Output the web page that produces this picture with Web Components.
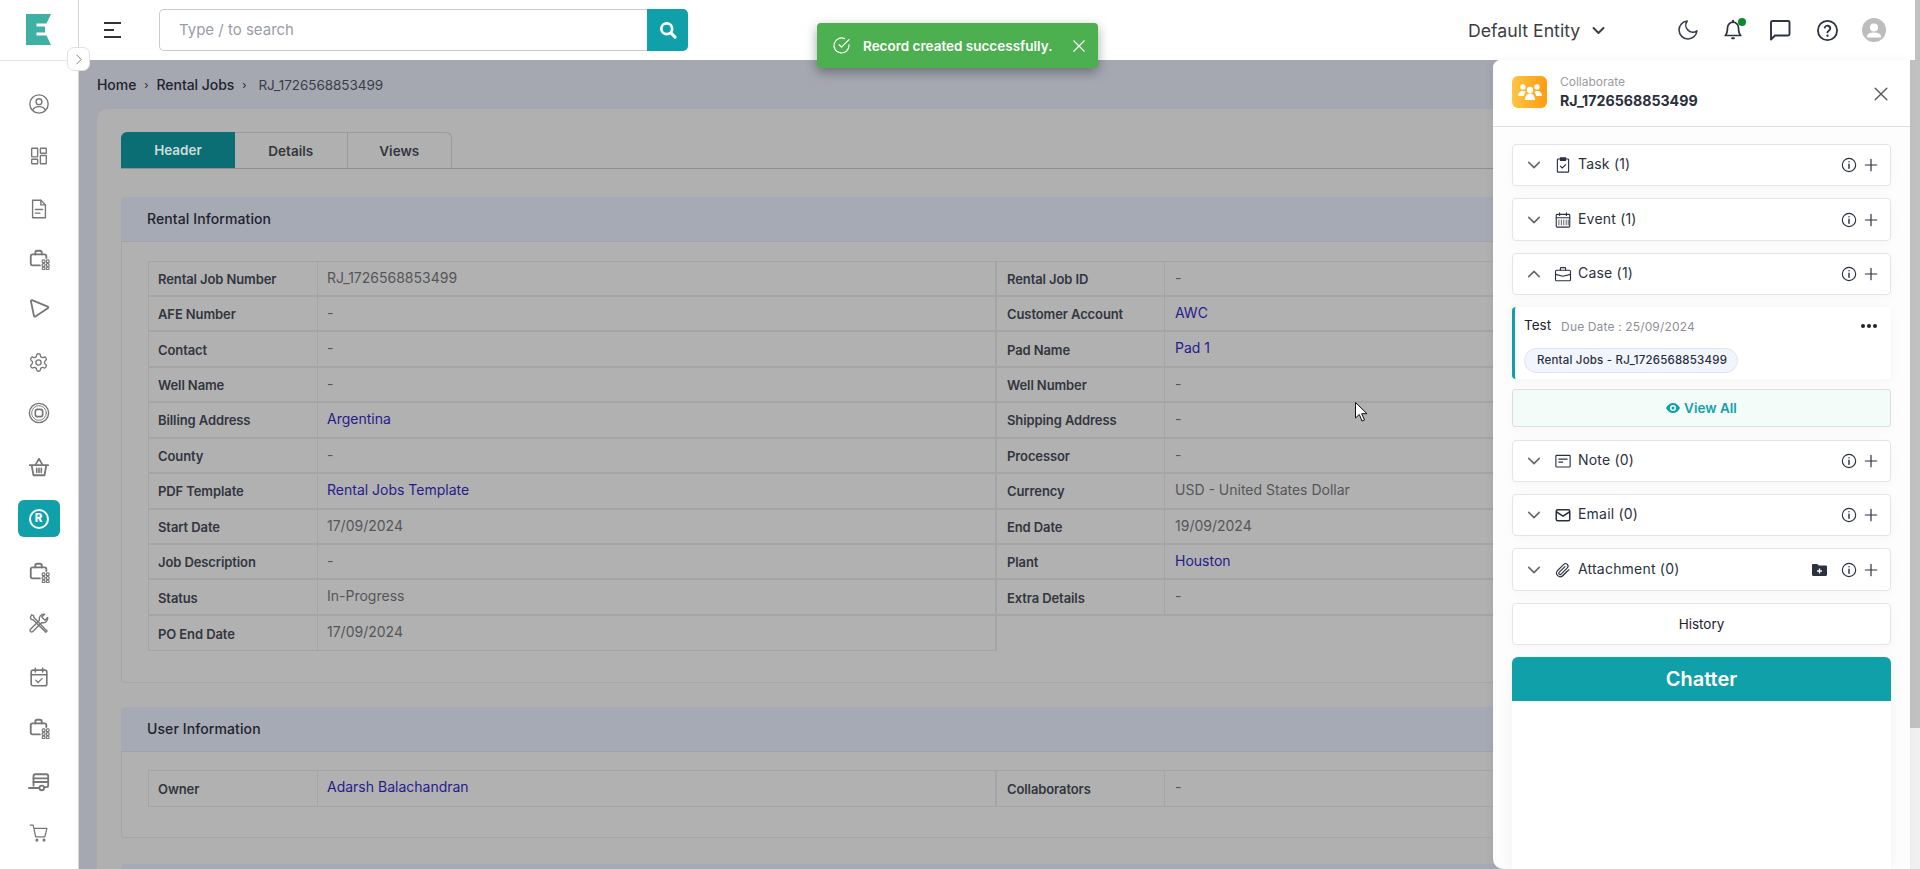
<!DOCTYPE html>
<html lang="en"><head><meta charset="utf-8"><title>Rental Job</title>
<style>
html,body{margin:0;height:100%;overflow:hidden;background:#fff;font-family:Inter,"Noto Sans",sans-serif}
</style></head><body>
<x-app>
  <x-sidebar slot="side"></x-sidebar>
  <x-topbar slot="top"></x-topbar>
  <x-crumbs slot="main"></x-crumbs>
  <x-card slot="main">
    <x-tabs>
      <x-tab active style="width:114px">Header</x-tab>
      <x-tab style="width:112.500px">Details</x-tab>
      <x-tab last style="width:104.500px">Views</x-tab>
    </x-tabs>
    <x-section heading="Rental Information" gap="28">
      <x-field-table>
        <x-field label="Rental Job Number" value="RJ_1726568853499"></x-field>
        <x-field right label="Rental Job ID" value="-"></x-field>
        <x-field label="AFE Number" value="-"></x-field>
        <x-field right link label="Customer Account" value="AWC"></x-field>
        <x-field label="Contact" value="-"></x-field>
        <x-field right link label="Pad Name" value="Pad 1"></x-field>
        <x-field label="Well Name" value="-"></x-field>
        <x-field right label="Well Number" value="-"></x-field>
        <x-field link label="Billing Address" value="Argentina"></x-field>
        <x-field right label="Shipping Address" value="-"></x-field>
        <x-field label="County" value="-"></x-field>
        <x-field right label="Processor" value="-"></x-field>
        <x-field link label="PDF Template" value="Rental Jobs Template"></x-field>
        <x-field right label="Currency" value="USD - United States Dollar"></x-field>
        <x-field label="Start Date" value="17/09/2024"></x-field>
        <x-field right label="End Date" value="19/09/2024"></x-field>
        <x-field label="Job Description" value="-"></x-field>
        <x-field right link label="Plant" value="Houston"></x-field>
        <x-field label="Status" value="In-Progress"></x-field>
        <x-field right label="Extra Details" value="-"></x-field>
        <x-field last label="PO End Date" value="17/09/2024"></x-field>
      </x-field-table>
    </x-section>
    <x-section heading="User Information" gap="24" tail="30">
      <x-field-table>
        <x-field last link label="Owner" value="Adarsh Balachandran"></x-field>
        <x-field last right label="Collaborators" value="-"></x-field>
      </x-field-table>
    </x-section>
    <x-section heading="" gap="26"></x-section>
  </x-card>
  <x-toast slot="over">Record created successfully.</x-toast>
  <x-collab slot="over">
    <x-row icon="task" label="Task (1)"></x-row>
    <x-row icon="event" label="Event (1)"></x-row>
    <x-row icon="case" label="Case (1)" open></x-row>
    <x-case-card></x-case-card>
    <x-viewall></x-viewall>
    <x-row icon="note" label="Note (0)"></x-row>
    <x-row icon="mail" label="Email (0)"></x-row>
    <x-row icon="clip" label="Attachment (0)" folder></x-row>
    <x-history></x-history>
    <x-chatter></x-chatter>
  </x-collab>
  <x-scroll slot="over"></x-scroll>
  <x-cursor slot="over"></x-cursor>
</x-app>
<script>
const P={
user:'<circle cx="12" cy="12" r="10"/><circle cx="12" cy="9.5" r="3.2"/><path d="M5.2 18.5c1.2-2.6 3.8-3.6 6.8-3.6s5.600 1 6.800 3.600"/>',
dash:'<rect x="4" y="3.500" width="6.500" height="9.500" rx=".6"/><rect x="13.500" y="3.500" width="6.500" height="5.500" rx=".6"/><rect x="4" y="15.500" width="6.500" height="5" rx=".6"/><rect x="13.500" y="11.500" width="6.500" height="9" rx=".6"/>',
doc:'<path d="M5 2.500h9l5 5v14H5z"/><path d="M14 2.500v5h5M8 12.500h8M8 16.500h5"/>',
brief:'<path d="M13 19H5a2 2 0 0 1-2-2V9a2 2 0 0 1 2-2h13a2 2 0 0 1 2 2v2" stroke-width="2"/><path d="M8 7V5a2 2 0 0 1 2-2h3a2 2 0 0 1 2 2v2" stroke-width="2"/><g stroke-width="1.300"><rect x="15.500" y="13" width="3" height="3" rx="1"/><rect x="20" y="13" width="3" height="3" rx="1"/><rect x="15.500" y="17" width="3" height="3" rx="1"/><rect x="20" y="17" width="3" height="3" rx="1"/><rect x="15.500" y="21" width="3" height="2.500" rx="1"/><rect x="20" y="21" width="3" height="2.500" rx="1"/></g>',
play:'<path d="M4.500 3.500 21.500 10.500a1 1 0 0 1 .1 1.800L8 21.300a1 1 0 0 1-1.500-.7L3.200 4.700a1 1 0 0 1 1.300-1.200z" stroke-width="2"/>',
gear:'<path d="M12.220 2h-.44a2 2 0 0 0-2 2v.18a2 2 0 0 1-1 1.730l-.43.25a2 2 0 0 1-2 0l-.15-.08a2 2 0 0 0-2.730.73l-.22.38a2 2 0 0 0 .73 2.730l.15.1a2 2 0 0 1 1 1.720v.51a2 2 0 0 1-1 1.740l-.15.09a2 2 0 0 0-.73 2.730l.22.38a2 2 0 0 0 2.730.73l.15-.08a2 2 0 0 1 2 0l.43.25a2 2 0 0 1 1 1.730V20a2 2 0 0 0 2 2h.44a2 2 0 0 0 2-2v-.18a2 2 0 0 1 1-1.730l.43-.25a2 2 0 0 1 2 0l.15.08a2 2 0 0 0 2.730-.73l.22-.39a2 2 0 0 0-.73-2.730l-.15-.08a2 2 0 0 1-1-1.740v-.5a2 2 0 0 1 1-1.740l.15-.09a2 2 0 0 0 .73-2.730l-.22-.38a2 2 0 0 0-2.730-.73l-.15.08a2 2 0 0 1-2 0l-.43-.25a2 2 0 0 1-1-1.730V4a2 2 0 0 0-2-2z"/><circle cx="12" cy="12" r="3"/>',
target:'<circle cx="12" cy="12" r="10.500"/><circle cx="12" cy="12" r="8" stroke-width="1"/><rect x="8" y="8" width="8" height="8" rx="2.500" stroke-width="1.800"/>',
basket:'<path d="M2 10h20M4 10l2 11h12l2-11" stroke-width="2"/><path d="M8 10l4-7 4 7M9.500 13.500v4.500M12 13.500v4.500M14.500 13.500v4.500" stroke-width="1.800"/>',
tools:'<path d="m4 3 2 1 .500 2L19 19l1.800 1.800-1.300 1.200L5.500 8.500l-2-.5-1-2z"/><path d="M21.500 6a5 5 0 0 1-6.500 5.500L5 21.500a1.800 1.800 0 0 1-2.500-2.500L12.500 9A5 5 0 0 1 18 2.500L15 5.500l3.500 3.500z"/>',
calcheck:'<rect x="3.500" y="4.500" width="17" height="17" rx="2" stroke-width="1.800"/><path d="M3.500 9.500h17M8 2.500v4M16 2.500v4" stroke-width="1.800"/><path d="m8.500 15.500 2.500 2.500 4.500-4.500" stroke-width="1.300"/>',
trailer:'<path d="M6 16V5.500a2 2 0 0 1 2-2h12a2 2 0 0 1 2 2V16a1.500 1.500 0 0 1-1.500 1.500H18M1 18.500h11" stroke-width="2"/><path d="M6 8h16M6 12h16" stroke-width="2"/><circle cx="15" cy="18.500" r="2.500" stroke-width="2"/>',
cart:'<path d="M1.500 2.500H5l3 14h11l2.500-10H6"/><circle cx="9.500" cy="20.500" r="1.100" fill="currentColor"/><circle cx="18" cy="20.500" r="1.100" fill="currentColor"/>',
search:'<circle cx="10.500" cy="10.500" r="6.500" stroke-width="3.200"/><path d="m15.500 15.500 5 5" stroke-width="3.600"/>',
moon:'<path d="M21 12.790A9 9 0 1 1 11.210 3 7 7 0 0 0 21 12.790z"/>',
bell:'<path d="M18 9.500a6 6 0 0 0-12 0c0 6-2.500 8.500-2.500 8.500h17S18 15.500 18 9.500z"/><path d="M12 3.500V2M11 21h2" stroke-width="2.200"/>',
chat:'<path d="M21.500 16a1.500 1.500 0 0 1-1.500 1.500H7L3 21.500V4.500A1.500 1.500 0 0 1 4.500 3H20a1.500 1.500 0 0 1 1.500 1.500z"/>',
help:'<circle cx="12" cy="12" r="10"/><path d="M9.090 9a3 3 0 0 1 5.830 1c0 2-3 2.500-3 4"/><path d="M12 17.500h.01" stroke-width="2.400"/>',
check:'<path d="M21.500 11.080V12a9.500 9.500 0 1 1-5.630-8.680"/><path d="M21.500 4.500 12 14l-3-3"/>',
x:'<path d="M5 5l14 14M19 5 5 19"/>',
down:'<path d="m5 8.500 7 7 7-7"/>',
up:'<path d="m5 15.500 7-7 7 7"/>',
right:'<path d="m9 4 8 8-8 8"/>',
task:'<rect x="4.500" y="4" width="15" height="17.500" rx="1"/><path d="M8.500 2.500h7v3.500h-7z" fill="currentColor"/><path d="m8.500 13.500 2.500 2.500 4.500-4.500"/>',
event:'<rect x="3" y="4.500" width="18" height="17" rx="1.200"/><path d="M3 9h18M7.500 2.500v3.500M16.500 2.500v3.500"/><path d="M6.500 12v6.500M9.800 12v6.500M13 12v6.500M16.300 12v6.500M19 12v6.500" stroke-width="1"/>',
case:'<rect x="2" y="7" width="20" height="14" rx="1.500"/><path d="M8.500 7V4.500a1 1 0 0 1 1-1h5a1 1 0 0 1 1 1V7M2 12.500l10 2.500 10-2.500"/>',
note:'<rect x="2.500" y="4.500" width="19" height="15.500" rx="1"/><path d="M6.500 9.500h11M6.500 13.500h5"/>',
mail:'<rect x="3" y="5" width="18" height="14.500" rx="2" stroke-width="2"/><path d="m3.500 8 8.500 5.500L20.500 8" stroke-width="2"/>',
clip:'<path d="M20 11.500 11.500 20a5 5 0 0 1-7-7L13 4.500a3.300 3.300 0 0 1 4.700 4.700l-8.500 8.500a1.700 1.700 0 0 1-2.400-2.400l7.800-7.800"/><path d="M17 13.500 10.500 20" stroke-width="1"/>',
info:'<circle cx="12" cy="12" r="10"/><path d="M12 11v6M12 7h.01" stroke-width="2.200"/>',
plus:'<path d="M12 3.500v17M3.500 12h17"/>'
};
const svg=(n,s,w=1.7,c='currentColor',extra='')=>`<svg xmlns="http://www.w3.org/2000/svg" width="${s}" height="${s}" viewBox="0 0 24 24" fill="none" stroke="${c}" stroke-width="${w}" stroke-linecap="round" stroke-linejoin="round" style="display:block;flex:none;${extra}">${P[n]}</svg>`;
const F='Inter,"Noto Sans",sans-serif';
class Base extends HTMLElement{
  connectedCallback(){ if(this.shadowRoot) return; this.attachShadow({mode:'open'}).innerHTML=this.render(); }
  a(n){return this.getAttribute(n)}
}
const def=(n,r)=>customElements.define(n,class extends Base{render(){return r.call(this)}});

def('x-app',()=>`<style>
:host{display:grid;grid-template-columns:79px 1fr;grid-template-rows:60px 1fr;width:1920px;height:869px;position:relative;overflow:hidden;font-family:${F}}
.s{grid-row:1/3;display:block}.t{display:block;min-width:0}
main{background:#a5a8b1;overflow:hidden;min-width:0;padding:0 23px 0 18px}
</style><div class="s"><slot name="side"></slot></div><div class="t"><slot name="top"></slot></div><main><slot name="main"></slot></main><slot name="over"></slot><slot></slot>`);

def('x-sidebar',()=>{
 const items=['user','dash','doc','brief','play','gear','target','basket','R','brief','tools','calcheck','brief','trailer','cart'];
 const sizes={user:22,dash:22,doc:22,brief:22,play:22,gear:21,target:22,basket:22,tools:22,calcheck:22,trailer:22,cart:20};
 const nudge=[0,0,1,-1,-4,-2,-3,-1.500,-2,-.6,-1.700,0,-1,1,0];
 return `<style>
 :host{display:flex;flex-direction:column;height:869px;width:79px;background:#fff;border-right:1px solid #d4d5d9;box-sizing:border-box;position:relative;z-index:3}
 .logo{height:61px;box-sizing:border-box;border-bottom:1px solid #e3e4e7;padding:14px 0 0 26px;flex:none}
 nav{padding-top:17px;display:flex;flex-direction:column}
 .i{height:52.070px;display:flex;align-items:center;justify-content:center;color:#777;padding-right:1px}
 .a{width:42px;height:37px;border-radius:6px;background:#10a0aa;display:flex;align-items:center;justify-content:center}
 .r{width:20px;height:20px;box-sizing:border-box;border:2.500px solid #fff;border-radius:50%;color:#fff;font:800 11.500px/15px ${F};text-align:center}
 .exp{position:absolute;left:67px;top:47px;width:23px;height:24px;box-sizing:border-box;background:#fff;border:1px solid #e0e1e4;border-radius:7px;display:flex;align-items:center;justify-content:center;color:#666}
 </style>
 <div class="logo"><svg width="25" height="31" viewBox="0 0 25 31" style="display:block"><path fill="#3fb0a4" d="M0 0H25L20.500 9.500H10.500V12.500H19V18.500H10.500V21.500H20.500L25 31H0Z"/></svg></div>
 <nav>${items.map((n,k)=>`<div class="i" style="padding-top:${Math.max(0,nudge[k]*2)}px;padding-bottom:${Math.max(0,-nudge[k]*2)}px;box-sizing:border-box">${n=='R'?'<div class="a"><div class="r">R</div></div>':svg(n,sizes[n],1.5)}</div>`).join('')}</nav>
 <div class="exp">${svg('right',13,1.500)}</div>`});

def('x-topbar',()=>`<style>
 :host{display:flex;align-items:center;height:60px;background:#fff;position:relative;color:#333}
 .h{margin-left:25px;width:18px;display:flex;flex-direction:column;gap:5px;flex:none}
 .h i{display:block;height:2px;background:#333}
 .h i:nth-child(1){width:17px}.h i:nth-child(2){width:10px}.h i:nth-child(3){width:17px}
 .q{margin-left:37px;width:529px;height:42px;display:flex;flex:none}
 .inp{flex:1;box-sizing:border-box;border:1px solid #c9cbd0;border-right:0;border-radius:5px 0 0 5px;padding-left:19px;font-size:15px;line-height:40px;color:#9a9da5}
 .b{width:41px;background:#10a0aa;border-radius:0 5px 5px 0;display:flex;align-items:center;justify-content:center}
 .e{position:absolute;left:1389px;top:0;height:60px;display:flex;align-items:center;font-size:17.700px;color:#3d3d42;white-space:nowrap}
 .e svg{margin-left:10px}
 .ic{position:absolute;top:18px;color:#2e3340}
 .dot{position:absolute;left:1659px;top:18px;width:8px;height:8px;border-radius:50%;background:#0a8a2e}
 .av{position:absolute;left:1783px;top:18px;width:24px;height:24px;border-radius:50%;background:#bdbdbd;overflow:hidden}
 </style>
 <div class="h"><i></i><i></i><i></i></div>
 <div class="q"><div class="inp">Type / to search</div><div class="b">${svg('search',20,3,'#fff')}</div></div>
 <div class="e">Default Entity ${svg('down',17,2.800,'#3d3d42')}</div>
 <div class="ic" style="left:1597px">${svg('moon',24,1.600,'#3a3f4a')}</div>
 <div class="ic" style="left:1643px;top:19px">${svg('bell',22,1.900)}</div><div class="dot"></div>
 <div class="ic" style="left:1689px">${svg('chat',24,1.900)}</div>
 <div class="ic" style="left:1736.500px;top:18.500px">${svg('help',23,1.900)}</div>
 <div class="av"><svg width="24" height="24" viewBox="0 0 24 24" style="display:block"><circle cx="12" cy="9.500" r="4" fill="#fff"/><path fill="#fff" d="M5 18.500c0-3 3.500-4 7-4s7 1 7 4v1H5z"/></svg></div>`);

def('x-crumbs',()=>`<style>
 :host{display:flex;align-items:center;height:49px;font-size:14px;color:#1f2330;font-weight:500;white-space:nowrap;letter-spacing:-.05px}
 .s{font-size:11px;margin:0 8px 0 8px;font-weight:400}.l{font-weight:400;font-size:13.500px;color:#3a3d46;margin-left:4px}
 </style><span>Home</span><span class="s">›</span><span>Rental Jobs</span><span class="s">›</span><span class="l">RJ_1726568853499</span>`);

def('x-card',()=>`<style>
 :host{display:block;background:#b0b0b0;border-radius:10px 10px 0 0;padding:23px 24px 0;height:900px;box-sizing:border-box}
 </style><slot></slot>`);
def('x-tabs',()=>`<style>:host{display:flex;height:37px;box-sizing:border-box;border-bottom:1px solid #8e8e8e}</style><slot></slot>`);
def('x-tab',function(){const act=this.hasAttribute('active'),l=this.hasAttribute('last');return `<style>
 :host{display:flex;align-items:center;justify-content:center;box-sizing:border-box;height:36px;font-size:13.500px;font-weight:600;
 background:${act?'#0b6e75':'transparent'};color:${act?'#cfdcdc':'#33363d'};border:${act?'0':'1px solid #9b9b9b'};border-left:0;border-bottom:0;
 border-radius:${act?'6px 0 0 0':l?'0 6px 0 0':'0'}}</style><slot></slot>`});

def('x-section',function(){const h=this.a('heading');return `<style>
 :host{display:block;margin-top:${this.a('gap')}px}
 .h{height:45px;box-sizing:border-box;background:#a6aab4;border-bottom:1px solid #a0a2a8;border-radius:4px 4px 0 0;padding-left:26px;font-size:14px;font-weight:500;line-height:43px;color:#20232d;letter-spacing:.1px}
 .b{border:1px solid #a6a6a6;border-top:0;border-radius:0 0 4px 4px;padding:18.500px 26px ${this.a('tail')||30.500}px;background:#b1b1b1}
 </style><div class="h">${h}</div>${this.children.length?'<div class="b"><slot></slot></div>':''}`});

def('x-field-table',()=>`<style>:host{display:grid;grid-template-columns:849px 849px;grid-auto-rows:35.450px;align-content:start;border-top:1px solid #a5a5a5;position:relative}</style><slot></slot>`);
def('x-field',function(){const r=this.hasAttribute('right'),l=this.hasAttribute('link'),last=this.hasAttribute('last');return `<style>
 :host{display:grid;grid-template-columns:${r?168:169}px 1fr;box-sizing:border-box;border-bottom:${last?'1':'2'}px solid #a5a5a5;border-left:${r?'0':'1px solid #a5a5a5'};${r?'':'border-right:2px solid #a5a5a5;'}font-size:13px;min-width:0}
 .k{padding:1px 0 0 ${r?10:9}px;font-weight:600;color:#33363e;display:flex;align-items:center;border-right:1px solid #a5a5a5;white-space:nowrap;letter-spacing:-.1px}
 .v{padding-left:${r?10:9}px;font-size:14px;color:${l?'#271b8c':'#55565a'};line-height:32px;white-space:nowrap}
 </style><div class="k">${this.a('label')}</div><div class="v">${this.a('value')}</div>`});

def('x-toast',function(){return `<style>
 :host{position:absolute;left:817px;top:23px;width:281px;height:45px;background:#4caf50;border-radius:4px;box-shadow:0 4px 12px rgba(0,0,0,.35);display:flex;align-items:center;color:#fff;font-size:13.500px;font-weight:600;z-index:6;white-space:nowrap}
 .c{margin:0 12px 0 15px}.x{position:absolute;left:253px;top:13.500px}
 </style><div class="c">${svg('check',19,1.500,'#fff')}</div><slot></slot><div class="x">${svg('x',18,1.500,'#fff')}</div>`});

def('x-collab',()=>`<style>
 :host{position:absolute;left:1493px;top:60px;width:417px;height:809px;background:#fdfdfd;border-radius:8px 0 0 10px;display:flex;flex-direction:column;box-sizing:border-box;z-index:5;box-shadow:-2px 0 8px rgba(0,0,0,.05);overflow:hidden}
 .hd{height:67px;box-sizing:border-box;border-bottom:1px solid #dcdee5;background:#fff;position:relative;flex:none;padding:16px 0 0 19px;display:flex}
 .ti{width:35px;height:32px;border-radius:6px;background:linear-gradient(90deg,#fdc544,#ff9c10);display:flex;align-items:center;justify-content:center}
 .t{margin-left:13px}
 .t1{font-size:12px;line-height:14px;color:#9b9ca2;margin-top:-1px}
 .t2{font-size:14.200px;line-height:20px;margin-top:2px;font-weight:700;color:#2b2f3c}
 .cl{position:absolute;right:19px;top:24px;color:#555}
 .bd{flex:1;min-height:0;padding:17px 19px 0;display:flex;flex-direction:column}
 </style>
 <div class="hd"><div class="ti"><svg width="24" height="20" viewBox="0 0 24 20" fill="#fff"><circle cx="5" cy="5" r="2.700"/><circle cx="19" cy="5" r="2.700"/><circle cx="12" cy="8" r="3.200"/><path d="M0 14c0-3 2-5 5-5 1 0 2 .3 2.800 .9C6.500 11 6 12.500 6 14H0zM24 14c0-3-2-5-5-5-1 0-2 .3-2.800 .9 1.300 1.100 1.800 2.600 1.800 4.100h6zM7 18c0-4 2-6.500 5-6.500s5 2.500 5 6.500H7z"/></svg></div>
 <div class="t"><div class="t1">Collaborate</div><div class="t2">RJ_1726568853499</div></div>
 <div class="cl">${svg('x',20,1.600)}</div></div>
 <div class="bd"><slot></slot></div>`);

def('x-row',function(){const open=this.hasAttribute('open');return `<style>
 :host{display:flex;align-items:center;height:42.400px;flex:none;margin-bottom:12px;box-sizing:border-box;background:#fff;border:1px solid #e4e5e8;border-radius:4px;box-shadow:0 2px 12px rgba(0,0,0,.03);padding:0 11px 0 12px;color:#2c3140;font-size:14px}
 .c{color:#6a6a6a}.ic{margin-left:11px;width:18px;display:flex;justify-content:center}
 .l{margin-left:6px;flex:1;white-space:nowrap;margin-top:-3px;letter-spacing:.2px}
 .f{margin-right:14px}.in{margin-right:6px}
 </style><div class="c">${svg(open?'up':'down',18,2.200)}</div><div class="ic">${svg(this.a('icon'),18,1.500)}</div><div class="l">${this.a('label')}</div>
 ${this.hasAttribute('folder')?`<div class="f"><svg width="15" height="12" viewBox="0 0 15 12" style="display:block"><path fill="#2c3140" d="M0 1.200C0 .5.500 0 1.200 0h4l1.500 1.600h7.100c.7 0 1.200.5 1.200 1.200v8c0 .7-.5 1.200-1.200 1.200H1.200C.5 12 0 11.500 0 10.800z"/><path stroke="#fff" stroke-width="1.300" d="M7.500 4.500v5M5 7h5"/></svg></div>`:''}
 <div class="in">${svg('info',16,1.700)}</div><div>${svg('plus',16,1.800)}</div>`});

def('x-case-card',()=>`<style>
 :host{display:block;position:relative;height:72px;flex:none;margin-bottom:10px;box-sizing:border-box;background:#fff;border-left:3px solid #10a0aa;border-radius:4px;box-shadow:0 2px 12px rgba(0,0,0,.04);color:#20232d}
 .r1{display:flex;align-items:flex-start;padding:9px 0 0 9px;font-size:13.500px;line-height:18px}
 .d{margin:2px 0 0 10px;font-size:12px;color:#8f9097;letter-spacing:.15px}
 .m{position:absolute;right:14px;top:17px;display:flex;gap:2px}.m i{width:4px;height:4px;border-radius:50%;background:#222}
 .chip{position:absolute;left:9px;top:41px;height:25px;box-sizing:border-box;width:214px;border:1px solid #dfe4ef;border-radius:13px;background:#f1f5fd;font-size:11.500px;font-weight:500;line-height:23px;padding-left:12px;color:#2b2f3c;white-space:nowrap;letter-spacing:.2px}
 </style><div class="r1"><span>Test</span><span class="d">Due Date : 25/09/2024</span></div><div class="m"><i></i><i></i><i></i></div><div class="chip">Rental Jobs - RJ_1726568853499</div>`);

def('x-viewall',()=>`<style>
 :host{display:flex;align-items:center;justify-content:center;gap:4px;height:38px;flex:none;margin-bottom:12.500px;box-sizing:border-box;background:#f3fcf8;border:1px solid #dcdfe2;border-radius:3px;color:#12a0a8;font-size:13.500px;font-weight:600;box-shadow:0 2px 12px rgba(0,0,0,.03)}
 </style><svg width="14" height="10" viewBox="0 0 14 10" style="display:block"><path fill="#12a0a8" fill-rule="evenodd" d="M7 0C4 0 1.500 2 0 5c1.500 3 4 5 7 5s5.500-2 7-5c-1.500-3-4-5-7-5zm0 2a3 3 0 1 1 0 6 3 3 0 0 1 0-6zm0 1.500a1.500 1.500 0 1 0 0 3 1.500 1.500 0 0 0 0-3z"/></svg>View All`);

def('x-history',()=>`<style>
 :host{display:flex;align-items:center;justify-content:center;height:42.400px;flex:none;margin-bottom:12px;box-sizing:border-box;background:#fff;border:1px solid #e4e5e8;border-radius:4px;color:#20232d;font-size:13.500px;box-shadow:0 2px 12px rgba(0,0,0,.03)}
 </style>History`);
def('x-chatter',()=>`<style>
 :host{display:flex;flex-direction:column;flex:1;min-height:0;background:#fff;border-radius:6px 6px 0 0;box-shadow:0 2px 14px rgba(0,0,0,.05)}
 .h{height:44px;background:#10a0a9;border-radius:6px 6px 0 0;color:#fff;font-size:20px;font-weight:600;display:flex;align-items:center;justify-content:center;flex:none}
 </style><div class="h">Chatter</div>`);
def('x-scroll',()=>`<style>
 :host{position:absolute;left:0;top:0;width:100%;height:100%;pointer-events:none;z-index:4;display:block}
 .a{position:absolute;left:1915px;top:0;width:5px;height:60px;background:#c1c1c1}
 .b{position:absolute;left:1910px;top:60px;width:10px;height:668px;background:#c1c1c1}
 .c{position:absolute;left:1910px;top:728px;width:10px;height:141px;background:#f0f0f0}
 </style><div class="a"></div><div class="b"></div><div class="c"></div>`);
def('x-cursor',()=>`<style>:host{position:absolute;left:1355px;top:402px;z-index:4;display:block}</style>
 <svg width="13" height="20" viewBox="0 0 13 20" style="display:block"><path d="M.5.500V16l3.800-3.500L7 19l2.500-1-2.800-6.300H12z" fill="#fff" stroke="#111" stroke-width="1"/></svg>`);
</script>
</body></html>
